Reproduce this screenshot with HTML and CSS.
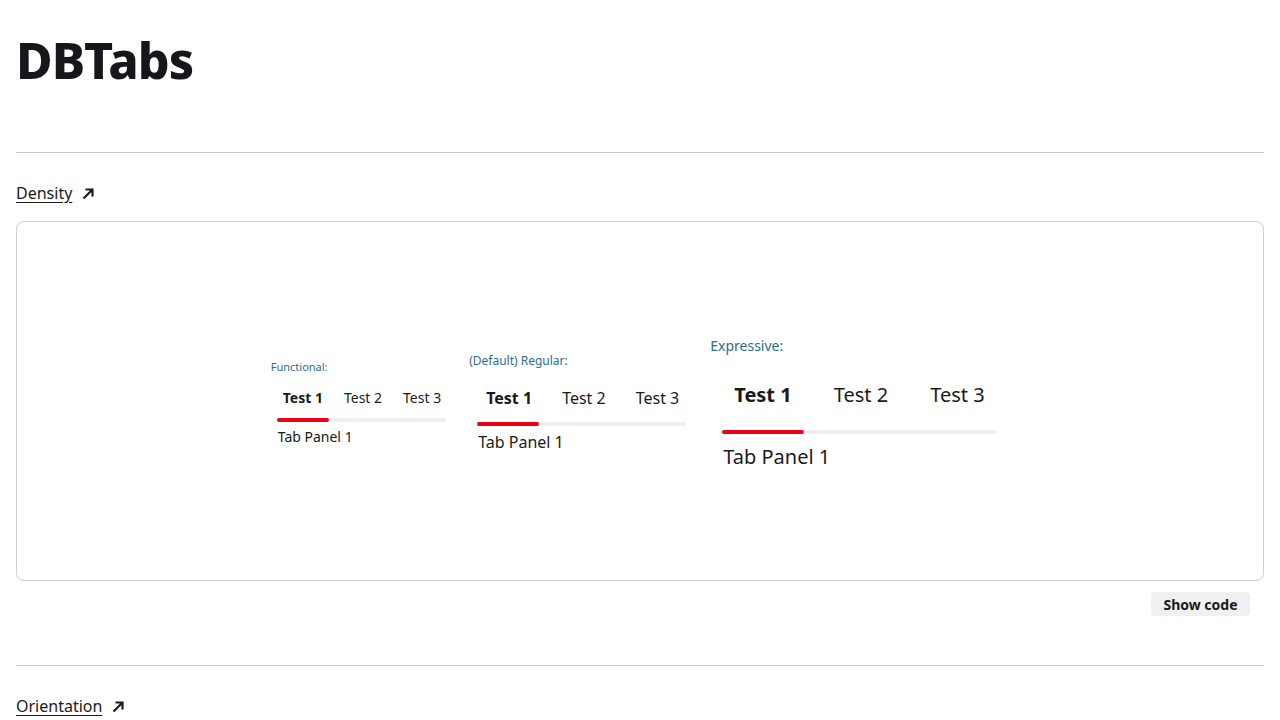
FILE: index.html
```html
<!DOCTYPE html>
<html lang="en">
<head>
<meta charset="utf-8">
<title>DBTabs</title>
<link rel="stylesheet" href="styles.css">
</head>
<body>
<h1 class="title">DBTabs</h1>
<hr class="divider">
<section class="section">
  <h2 class="section-head"><a class="section-link" href="#density">Density</a>
    <svg class="arrow" viewBox="0 0 16 16" width="16" height="16"><path d="M3.5 12.5 L12 4 M5.5 3.5 H12.5 V10.5" fill="none" stroke="#1a1a1a" stroke-width="2.2"/></svg>
  </h2>
  <div class="card">
    <div class="example ex-functional">
      <div class="ex-label">Functional:</div>
      <div class="tabs">
        <div class="tab-list">
          <span class="tab active">Test 1</span>
          <span class="tab">Test 2</span>
          <span class="tab">Test 3</span>
        </div>
        <div class="tab-bar"><span class="indicator"></span></div>
        <div class="panel">Tab Panel 1</div>
      </div>
    </div>
    <div class="example ex-regular">
      <div class="ex-label">(Default) Regular:</div>
      <div class="tabs">
        <div class="tab-list">
          <span class="tab active">Test 1</span>
          <span class="tab">Test 2</span>
          <span class="tab">Test 3</span>
        </div>
        <div class="tab-bar"><span class="indicator"></span></div>
        <div class="panel">Tab Panel 1</div>
      </div>
    </div>
    <div class="example ex-expressive">
      <div class="ex-label">Expressive:</div>
      <div class="tabs">
        <div class="tab-list">
          <span class="tab active">Test 1</span>
          <span class="tab">Test 2</span>
          <span class="tab">Test 3</span>
        </div>
        <div class="tab-bar"><span class="indicator"></span></div>
        <div class="panel">Tab Panel 1</div>
      </div>
    </div>
  </div>
  <div class="code-row"><button class="code-btn">Show code</button></div>
</section>
<hr class="divider divider-2">
<section class="section">
  <h2 class="section-head"><a class="section-link" href="#orientation">Orientation</a>
    <svg class="arrow" viewBox="0 0 16 16" width="16" height="16"><path d="M3.5 12.5 L12 4 M5.5 3.5 H12.5 V10.5" fill="none" stroke="#1a1a1a" stroke-width="2.2"/></svg>
  </h2>
</section>
</body>
</html>
```
FILE: styles.css
```css
* { box-sizing: border-box; }
html, body { margin: 0; padding: 0; }
body {
  padding: 0 16px;
  font-family: "Noto Sans", "Open Sans", sans-serif;
  color: #1a1a1a;
  background: #fff;
  overflow: hidden;
}
.title {
  margin: 0;
  padding-top: 28px;
  height: 96px;
  font-size: 50px;
  line-height: 64px;
  font-weight: 800;
  letter-spacing: -1px;
  color: #15171a;
}
.divider {
  margin: 56px 0 0;
  border: 0;
  border-top: 1px solid #cdcdcd;
  height: 0;
}
.section-head {
  margin: 0;
  padding-top: 27px;
  height: 68px;
  display: flex;
  align-items: flex-start;
  gap: 8px;
  font-size: 16px;
  line-height: 26px;
  font-weight: 400;
}
.section-link { color: #1a1a1a; text-decoration: underline; text-underline-offset: 3px; }
.arrow { margin-top: 6px; }
.card {
  height: 360px;
  border: 1px solid #cfcfcf;
  border-radius: 8px;
  display: flex;
  justify-content: center;
  align-items: center;
  gap: 22px;
  padding: 5px 12px 0 0;
}
.example { display: flex; flex-direction: column; }
.ex-label { color: #2a6d8f; }
.tab-list { display: flex; }
.tab { white-space: nowrap; }
.tab.active { font-weight: 700; }
.tab-bar { background: #f0f0f0; border-radius: 2px; position: relative; }
.indicator { display: block; height: 100%; background: #ec0016; border-radius: 2px; }

.ex-functional .ex-label { font-size: 11px; line-height: 14px; }
.ex-functional .tabs { padding-left: 6px; margin-top: 4px; }
.ex-functional .tab-list { gap: 9px; }
.ex-functional .tab { font-size: 14px; line-height: 20px; padding: 10px 6px; }
.ex-functional .tab-bar { height: 4px; width: 169px; }
.ex-functional .indicator { width: 52px; }
.ex-functional .panel { font-size: 14px; line-height: 20px; margin-top: 5px; padding-left: 1px; }

.ex-regular .ex-label { font-size: 12px; line-height: 16px; }
.ex-regular .tabs { padding-left: 8px; margin-top: 5px; }
.ex-regular .tab-list { gap: 12px; }
.ex-regular .tab { font-size: 16px; line-height: 24px; padding: 12px 9px; }
.ex-regular .tab-bar { height: 4px; width: 209px; }
.ex-regular .indicator { width: 62px; }
.ex-regular .panel { font-size: 16px; line-height: 24px; margin-top: 4px; padding-left: 1px; }

.ex-expressive .ex-label { font-size: 14px; line-height: 20px; }
.ex-expressive .tabs { padding-left: 12px; margin-top: 4px; }
.ex-expressive .tab-list { gap: 18px; }
.ex-expressive .tab { font-size: 20px; line-height: 28px; padding: 21px 12px; }
.ex-expressive .tab-bar { height: 4px; width: 275px; }
.ex-expressive .indicator { width: 82px; }
.ex-expressive .panel { font-size: 20px; line-height: 28px; margin-top: 9px; padding-left: 1px; }

.code-row { display: flex; justify-content: flex-end; padding: 11px 14px 0 0; height: 84px; }
.code-btn {
  font-family: inherit;
  font-size: 14px;
  font-weight: 700;
  color: #1a1a1a;
  background: #f0f0f0;
  border: 0;
  border-radius: 4px;
  height: 24px;
  width: 99px;
  padding: 0;
}
.divider-2 { margin-top: 0; }
```
